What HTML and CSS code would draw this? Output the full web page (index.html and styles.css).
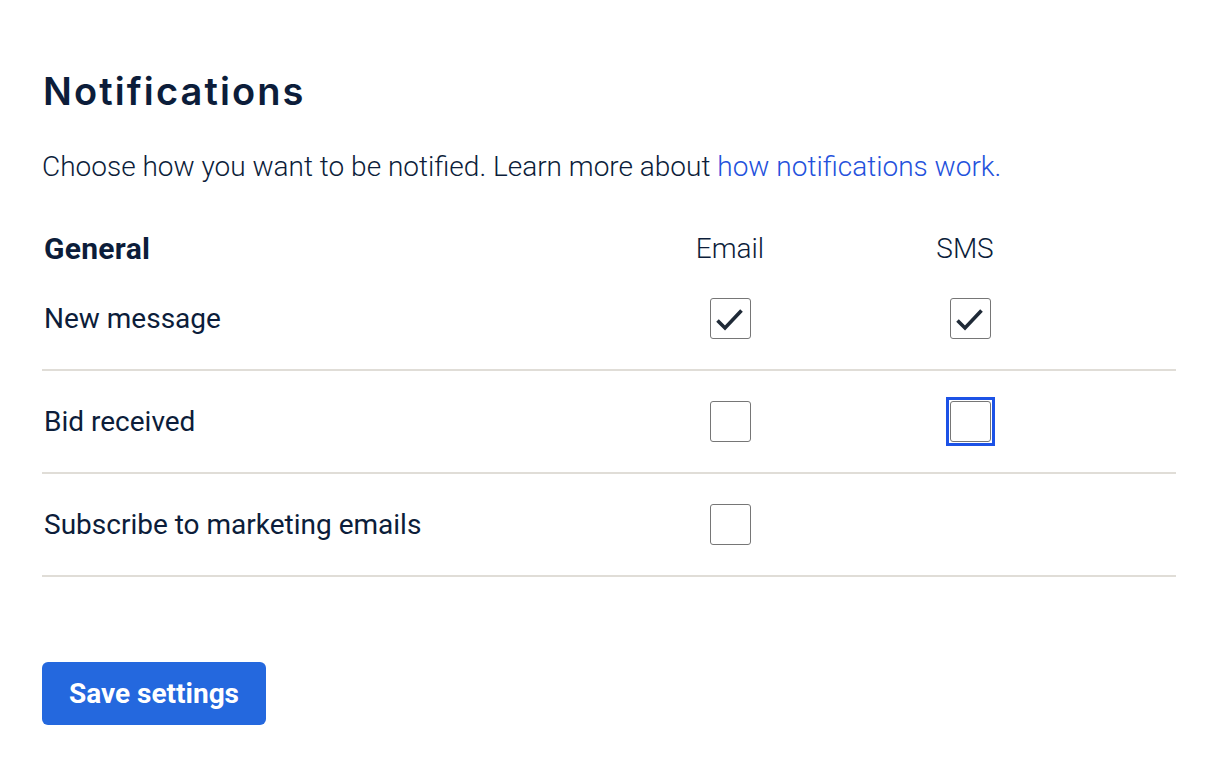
FILE: index.html
```html
<!DOCTYPE html>
<html lang="en">
<head>
<meta charset="utf-8">
<title>Notifications</title>
<link rel="stylesheet" href="styles.css">
</head>
<body>
<main class="page">
  <h1 class="title">Notifications</h1>
  <p class="intro">Choose how you want to be notified. Learn more about <a href="#" class="link">how notifications work.</a></p>
  <div class="table">
    <div class="row head">
      <div class="label group">General</div>
      <div class="col">Email</div>
      <div class="col sms-head">SMS</div>
      <div></div>
    </div>
    <div class="row item">
      <div class="label">New message</div>
      <div class="col"><span class="box checked"><svg viewBox="0 0 41 41" class="tick"><path d="M8.5 22.5 L16 30 L32.5 12.5" /></svg></span></div>
      <div class="col"><span class="box checked"><svg viewBox="0 0 41 41" class="tick"><path d="M8.5 22.5 L16 30 L32.5 12.5" /></svg></span></div>
      <div></div>
    </div>
    <div class="row item">
      <div class="label">Bid received</div>
      <div class="col"><span class="box"></span></div>
      <div class="col"><span class="box focus"></span></div>
      <div></div>
    </div>
    <div class="row item">
      <div class="label">Subscribe to marketing emails</div>
      <div class="col"><span class="box"></span></div>
      <div class="col"></div>
      <div></div>
    </div>
  </div>
  <button class="save" type="button">Save settings</button>
</main>
</body>
</html>
```
FILE: styles.css
```css
html, body {
  margin: 0;
  padding: 0;
  background: #ffffff;
}
.page {
  width: 1134px;
  padding: 64px 0 0 42px;
  font-family: Roboto, "Liberation Sans", sans-serif;
  color: #0c1d3a;
}
.title {
  margin: 0 0 0 1px;
  font-family: Inter, "Open Sans", sans-serif;
  font-size: 38px;
  font-weight: 600;
  line-height: 54px;
  color: #0c1d3a;
  letter-spacing: 2.1px;
}
.intro {
  margin: 32px 0 0 0;
  font-size: 28px;
  font-weight: 300;
  line-height: 34px;
}
.link {
  color: #2451dc;
  text-decoration: none;
}
.table {
  margin-top: 47px;
}
.row {
  display: grid;
  grid-template-columns: 1fr 240px 240px 86px;
  align-items: center;
}
.head {
  height: 34px;
  margin-bottom: 3px;
}
.label {
  padding-left: 2px;
  font-size: 28px;
  font-weight: 400;
}
.group {
  font-weight: 700;
  font-size: 30px;
  letter-spacing: 0.3px;
}
.head .col {
  font-size: 28px;
  font-weight: 300;
}
.col {
  display: flex;
  justify-content: center;
}
.sms-head {
  padding-right: 10px;
}
.item {
  padding: 30px 0;
  border-bottom: 2px solid #e0ddd7;
}
.box {
  position: relative;
  display: block;
  width: 41px;
  height: 41px;
  border: 1.5px solid #767676;
  border-radius: 3px;
  box-sizing: border-box;
  background: #fff;
}
.box.focus::after {
  content: "";
  position: absolute;
  inset: -5px;
  border: 3px solid #1c52e6;
}
.tick {
  display: block;
  width: 41px;
  height: 41px;
  margin: -1.5px;
}
.tick path {
  fill: none;
  stroke: #1f2a37;
  stroke-width: 3.6;
  stroke-linecap: butt;
  stroke-linejoin: miter;
}
.save {
  margin-top: 85px;
  width: 224px;
  height: 63px;
  border: none;
  border-radius: 6px;
  background: #2468de;
  color: #ffffff;
  font-family: Roboto, "Liberation Sans", sans-serif;
  font-size: 28px;
  font-weight: 700;
  cursor: pointer;
}
```
